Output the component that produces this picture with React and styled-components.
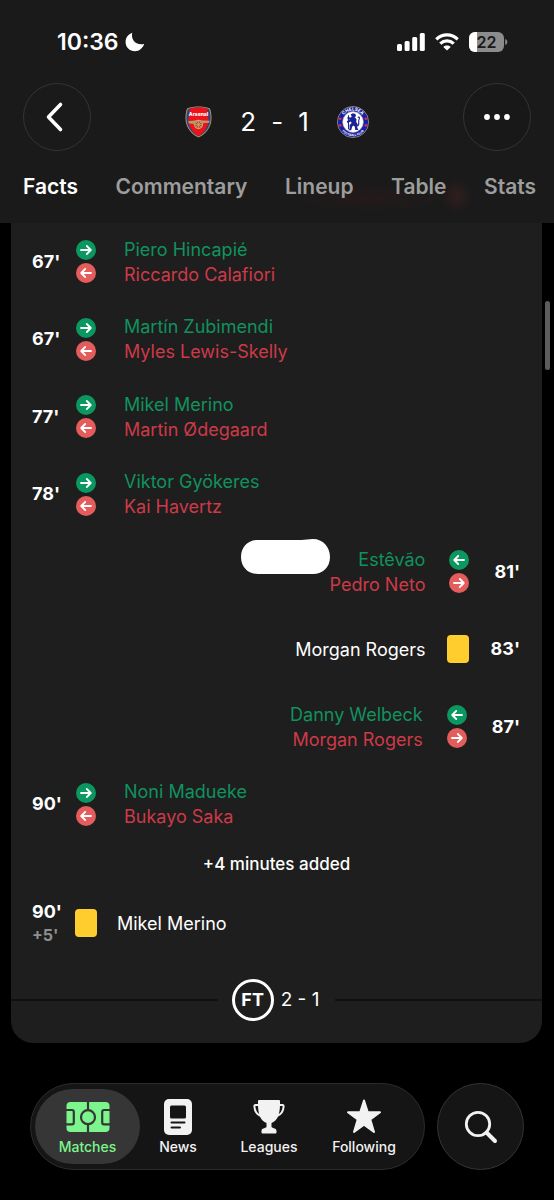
import styled, { createGlobalStyle } from "styled-components";

const GlobalStyle = createGlobalStyle`
  * {
    box-sizing: border-box;
  }
  body {
    margin: 0;
    background: #000;
    color: #fff;
    font-family: Inter, "Liberation Sans", sans-serif;
  }
  button {
    border: none;
    margin: 0;
    padding: 0;
    color: inherit;
    font-family: inherit;
    cursor: pointer;
  }
  svg {
    display: block;
    flex-shrink: 0;
  }
`;

const Page = styled.div`
  position: relative;
  min-height: 100vh;
  display: flex;
  flex-direction: column;
`;

const Header = styled.header`
  height: 223px;
  background:
    radial-gradient(ellipse 16px 18px at 457px 196px, rgba(100, 40, 40, 0.3), transparent),
    radial-gradient(ellipse 80px 14px at 370px 198px, rgba(80, 25, 30, 0.2), transparent),
    #1a1a1a;
`;

const StatusBar = styled.div`
  height: 83px;
  padding: 0 46px 0 57px;
  display: flex;
  align-items: center;
  justify-content: space-between;
`;

const StatusGroup = styled.div`
  display: flex;
  align-items: center;
  gap: ${(p) => p.$gap}px;
`;

const Clock = styled.span`
  font-size: 23px;
  font-weight: 600;
  line-height: 28px;
`;

const MatchBar = styled.div`
  height: 68px;
  padding: 0 23px;
  display: flex;
  align-items: center;
  justify-content: space-between;
`;

const RoundButton = styled.button`
  width: ${(p) => p.$size}px;
  height: ${(p) => p.$size}px;
  flex-shrink: 0;
  display: flex;
  align-items: center;
  justify-content: center;
  border: 1px solid #343434;
  border-radius: 50%;
  background: ${(p) => p.$bg};
`;

const ScoreLine = styled.div`
  display: flex;
  align-items: center;
  gap: 28px;
  padding-top: 9px;
`;

const Score = styled.div`
  display: flex;
  gap: 15px;
  font-size: 26px;
  line-height: 32px;
`;

const Tabs = styled.nav`
  height: 72px;
  padding: 0 18px 0 23px;
  display: flex;
  align-items: center;
  justify-content: space-between;
`;

const Tab = styled.button`
  background: none;
  font-size: 21px;
  font-weight: 600;
  line-height: 24px;
  color: ${(p) => (p.$active ? "#fff" : "#9d9d9d")};
`;

const Card = styled.main`
  margin: 0 12px 0 11px;
  padding-bottom: 5px;
  background: #1e1e1e;
  border-radius: 0 0 22px 22px;
`;

const EventList = styled.div`
  min-height: 620px;
  display: grid;
  grid-auto-rows: 1fr;
`;

const EventRow = styled.div`
  min-height: 76px;
  padding: 0 22px 0 21px;
  display: flex;
  align-items: center;
  flex-direction: ${(p) => (p.$away ? "row-reverse" : "row")};
`;

const Minute = styled.div`
  width: ${(p) => (p.$away ? "auto" : "43px")};
  font-size: 18px;
  font-weight: 700;
  line-height: 24px;
`;

const Added = styled.div`
  color: #8f8f8f;
  font-size: 16px;
  line-height: 22px;
`;

const SubIcons = styled.div`
  width: 22px;
  margin-right: ${(p) => (p.$away ? 24 : 0)}px;
  display: flex;
  flex-direction: column;
  align-items: center;
  gap: 3px;
`;

const YellowCard = styled.div`
  width: 22px;
  height: 28px;
  margin-right: ${(p) => (p.$away ? 22 : 0)}px;
  border-radius: 4px;
  background: #ffce2e;
`;

const Names = styled.div`
  margin: ${(p) => (p.$away ? "0 23px 0 0" : "0 0 0 27px")};
  text-align: ${(p) => (p.$away ? "right" : "left")};
  font-size: 18px;
  line-height: 25px;
`;

const NameIn = styled.div`
  color: #10925e;
`;

const NameOut = styled.div`
  color: #cd3a48;
`;

const Player = styled.div`
  margin: ${(p) => (p.$away ? "0 21px 0 0" : "0 0 0 20px")};
  font-size: 18px;
  line-height: 25px;
`;

const Blob = styled.svg`
  align-self: flex-start;
  margin-top: 6px;
`;

const AddedTime = styled.div`
  height: 42px;
  display: flex;
  align-items: center;
  justify-content: center;
  font-size: 17px;
  font-weight: 500;
`;

const FullTime = styled.div`
  height: 77px;
  display: flex;
  align-items: center;
`;

const Rule = styled.div`
  flex: 1;
  height: 2px;
  background: #111;
`;

const FullTimeLabel = styled.div`
  margin: 0 16px 0 14px;
  display: flex;
  align-items: center;
  gap: 7px;
  font-size: 19px;
`;

const FullTimeBadge = styled.span`
  width: 42px;
  height: 42px;
  display: flex;
  align-items: center;
  justify-content: center;
  border: 3px solid #fff;
  border-radius: 50%;
  font-size: 18px;
  font-weight: 700;
`;

const BottomBar = styled.footer`
  margin-top: 40px;
  padding: 0 30px 30px;
  display: flex;
  gap: 12px;
`;

const NavPill = styled.nav`
  flex: 1;
  height: 87px;
  padding: 5px 18px 5px 4px;
  display: grid;
  grid-template-columns: 105fr 76fr 106fr 84fr;
  border: 1px solid #2c2c2c;
  border-radius: 44px;
  background: #151515;
`;

const NavItem = styled.button`
  display: flex;
  flex-direction: column;
  align-items: center;
  gap: 3px;
  padding-top: 10px;
  border-radius: 38px;
  background: ${(p) => (p.$active ? "#363636" : "none")};
  color: ${(p) => (p.$active ? "#7cf58c" : "#f2f2f2")};
  font-size: 14px;
  font-weight: 500;
  line-height: 18px;
`;

const Scrollbar = styled.div`
  position: absolute;
  top: 301px;
  right: 4px;
  width: 5px;
  height: 69px;
  border-radius: 3px;
  background: #5c5c5c;
`;

const events = [
  { minute: "67'", on: "Piero Hincapié", off: "Riccardo Calafiori" },
  { minute: "67'", on: "Martín Zubimendi", off: "Myles Lewis-Skelly" },
  { minute: "77'", on: "Mikel Merino", off: "Martin Ødegaard" },
  { minute: "78'", on: "Viktor Gyökeres", off: "Kai Havertz" },
  { minute: "81'", on: "Estêvão", off: "Pedro Neto", away: true, blob: true },
  { minute: "83'", booked: "Morgan Rogers", away: true },
  { minute: "87'", on: "Danny Welbeck", off: "Morgan Rogers", away: true },
  { minute: "90'", on: "Noni Madueke", off: "Bukayo Saka" },
];

const ArrowBadge = ({ color, left }) => (
  <svg width="20" height="20" viewBox="0 0 20 20">
    <circle cx="10" cy="10" r="10" fill={color} />
    <path
      d={left ? "M15 10H5.4M9.2 6L5.2 10L9.2 14" : "M5 10H14.6M10.8 6L14.8 10L10.8 14"}
      fill="none"
      stroke="#fff"
      strokeWidth="1.8"
      strokeLinecap="round"
      strokeLinejoin="round"
    />
  </svg>
);

const Event = ({ minute, extra, on, off, booked, away, blob }) => (
  <EventRow $away={away}>
    <Minute $away={away}>
      {minute}
      {extra && <Added>{extra}</Added>}
    </Minute>
    {booked ? (
      <>
        <YellowCard $away={away} />
        <Player $away={away}>{booked}</Player>
      </>
    ) : (
      <>
        <SubIcons $away={away}>
          <ArrowBadge color="#0b9760" left={away} />
          <ArrowBadge color="#e45d5c" left={!away} />
        </SubIcons>
        <Names $away={away}>
          <NameIn>{on}</NameIn>
          <NameOut>{off}</NameOut>
        </Names>
      </>
    )}
    {blob && (
      <Blob width="89" height="36" viewBox="0 0 89 36">
        <path
          d="M17 1H60C65 1 67 0 72 0C82 0 89 8 89 18C89 28 82 35 72 35H17C7 35 0 28 0 18C0 8 7 1 17 1Z"
          fill="#fff"
        />
      </Blob>
    )}
  </EventRow>
);

const ArsenalCrest = () => (
  <svg width="27" height="32" viewBox="0 0 27 32">
    <path
      d="M2 2.5C6 .8 10 .4 13.500 .4S21 .8 25 2.500C26 5 26.600 9 26.500 13C26.300 22 20 28.500 13.500 31.600C7 28.500 .7 22 .5 13C.4 9 1 5 2 2.500Z"
      fill="#b49a62"
    />
    <path
      d="M2.800 3.200C6 1.900 10 1.300 13.500 1.300S21 1.900 24.200 3.200C25.200 6 25.700 9 25.600 13C25.400 21 20 27.500 13.500 30.600C7 27.500 1.600 21 1.400 13C1.300 9 1.800 6 2.800 3.200Z"
      fill="#2d4486"
    />
    <path
      d="M4.500 2.800C10 1.100 17 1.100 22.500 2.800C21.900 7 22.500 10 23.700 13C23.800 20 19.500 26.500 13.500 30.200C7.500 26.500 3.200 20 3.300 13C4.500 10 5.100 7 4.500 2.800Z"
      fill="#ed1119"
    />
    <text
      x="13.500"
      y="10"
      textAnchor="middle"
      fill="#fff"
      fontFamily="Inter, sans-serif"
      fontSize="5"
      fontWeight="800"
    >
      Arsenal
    </text>
    <path d="M3 15.200L12 14.200L24.500 14.800L24.300 16.800L17 17.200L15 18.500L4 17.500Z" fill="#b59a66" />
    <circle cx="13.500" cy="18.500" r="4" fill="#c2413a" stroke="#c0a570" strokeWidth="1.300" />
    <path
      d="M13.500 14.800V22.200M9.800 18.500H17.200M10.900 15.900L16.100 21.100M16.100 15.900L10.900 21.100"
      stroke="#c0a570"
      strokeWidth=".8"
    />
  </svg>
);

const ChelseaCrest = () => (
  <svg width="32" height="32" viewBox="0 0 32 32">
    <defs>
      <path id="crestTop" d="M4.600 16A11.400 11.400 0 0 1 27.400 16" />
      <path id="crestBottom" d="M1.800 16A14.200 14.200 0 0 0 30.200 16" />
    </defs>
    <circle cx="16" cy="16" r="15.600" fill="#1520a8" stroke="#a89568" strokeWidth=".8" />
    <circle cx="16" cy="16" r="10.400" fill="#fff" stroke="#b9ad88" strokeWidth=".6" />
    <g fill="#fff" fontFamily="Inter, sans-serif" fontWeight="700" textAnchor="middle">
      <text fontSize="4.500">
        <textPath href="#crestTop" startOffset="50%">CHELSEA</textPath>
      </text>
      <text fontSize="3">
        <textPath href="#crestBottom" startOffset="50%">FOOTBALL CLUB</textPath>
      </text>
    </g>
    <g fill="#d72a58">
      <circle cx="3.200" cy="12.800" r="1.300" />
      <circle cx="3.200" cy="19.400" r="1.300" />
      <circle cx="28.800" cy="12.800" r="1.300" />
      <circle cx="28.800" cy="19.400" r="1.300" />
    </g>
    <path
      d="M13.600 8.500L16 7.300L18.500 8L19 10.300L17.600 11.200L19.500 13L19.200 16L20.800 18.500L20.200 21.500L21.500 24H18.200L18 21.500L17 19.500L15.200 20.500L14.200 24.300H11L12.700 22.500L12.600 19L14.600 17L13.800 15.500L10.500 17L9.800 15.200L13 13.200L10.800 13.300L10.200 11.300L13.800 11.500L14.800 10.500Z"
      fill="#1a2394"
    />
    <path
      d="M20.200 20C23.500 19 20.500 15.500 22.200 13C23.300 11.500 21.500 10 21 11.800M11.500 9.200V23"
      fill="none"
      stroke="#1a2394"
      strokeWidth="1.100"
    />
  </svg>
);

const MoonIcon = () => (
  <svg width="20" height="20" viewBox="0 0 20 20">
    <path
      d="M7.200 .8C5.800 7.500 10.500 13.900 19.200 12C17.500 16.600 14 19.200 10 19.200C4.600 19.200 .6 15.200 .6 10C.6 5.800 3.200 2.300 7.200 .8Z"
      fill="#fff"
    />
  </svg>
);

const SignalIcon = () => (
  <svg width="28" height="18" viewBox="0 0 28 18" fill="#fff">
    <rect x="0" y="11" width="5" height="7" rx="1.500" />
    <rect x="7.600" y="8" width="5" height="10" rx="1.500" />
    <rect x="15.200" y="4" width="5" height="14" rx="1.500" />
    <rect x="22.800" y="0" width="5" height="18" rx="1.500" />
  </svg>
);

const WifiIcon = () => (
  <svg width="24" height="18" viewBox="0 0 24 18" fill="none" stroke="#fff" strokeWidth="3.200">
    <path d="M1.300 6.300C7.300 .3 16.700 .3 22.700 6.300" />
    <path d="M5.300 10.600C9.200 6.900 14.800 6.900 18.700 10.600" />
    <path d="M12 17.600L8.300 13.900C10.400 12 13.600 12 15.700 13.900Z" fill="#fff" stroke="none" />
  </svg>
);

const BatteryIcon = () => (
  <svg width="39" height="20" viewBox="0 0 39 20">
    <clipPath id="battery">
      <rect width="35" height="20" rx="6" />
    </clipPath>
    <g clipPath="url(#battery)">
      <rect width="35" height="20" fill="#8c8c8c" />
      <rect width="8" height="20" fill="#fff" />
    </g>
    <path d="M36.200 7C39 8 39 12 36.200 13Z" fill="#8c8c8c" />
    <text
      x="17.500"
      y="16"
      textAnchor="middle"
      fill="#1a1a1a"
      fontFamily="Inter, sans-serif"
      fontSize="16"
      fontWeight="600"
    >
      22
    </text>
  </svg>
);

const MatchesIcon = () => (
  <svg width="44" height="36" viewBox="0 0 44 36">
    <rect x=".5" y="3" width="43" height="30" rx="4" fill="currentColor" />
    <g fill="none" stroke="#363636" strokeWidth="2.200">
      <path d="M22 3V11M22 25.500V33" />
      <circle cx="22" cy="18.200" r="7" />
      <path d="M0 11H6Q7.800 11 7.800 13V23.500Q7.800 25.300 6 25.300H0M44 11H38Q36.200 11 36.200 13V23.500Q36.200 25.300 38 25.300H44" />
    </g>
  </svg>
);

const NewsIcon = () => (
  <svg width="28" height="36" viewBox="0 0 28 36">
    <rect y="0" width="28" height="36" rx="5" fill="currentColor" />
    <rect x="6" y="6.500" width="16" height="13" rx="1.500" fill="#151515" />
    <path d="M7.500 23.500H20.500M7.500 28.500H16" stroke="#151515" strokeWidth="2" strokeLinecap="round" />
  </svg>
);

const TrophyIcon = () => (
  <svg width="32" height="36" viewBox="0 0 32 36">
    <path
      d="M6 1H26Q27 1 27 2V5C27 16 24 22 18.500 24V28C20 29.500 23.500 29 23.500 32V33.500Q23.500 34.500 22.500 34.500H9.500Q8.500 34.500 8.500 33.500V32C8.500 29 12 29.500 13.500 28V24C8 22 5 16 5 5V2Q5 1 6 1Z"
      fill="currentColor"
    />
    <path
      d="M6 6H2.500Q1.300 6 1.400 7.500C1.600 12 4 15.500 8 17M26 6H29.500Q30.700 6 30.600 7.500C30.400 12 28 15.500 24 17"
      fill="none"
      stroke="currentColor"
      strokeWidth="2"
    />
  </svg>
);

const StarIcon = () => (
  <svg width="36" height="36" viewBox="0 0 36 36">
    <path
      d="M18 1.500L21.800 13.300H34L24.300 20.500L28 33L18 25.700L8 33L11.700 20.500L2 13.300H14.200Z"
      fill="currentColor"
      stroke="currentColor"
      strokeWidth="2"
      strokeLinejoin="round"
    />
  </svg>
);

const SearchIcon = () => (
  <svg width="34" height="34" viewBox="0 0 34 34" fill="none" stroke="#f2f2f2" strokeLinecap="round">
    <circle cx="14" cy="14" r="11.700" strokeWidth="2.800" />
    <path d="M22.500 22.500L31 31" strokeWidth="4" />
  </svg>
);

const App = () => {
  return (
    <Page>
      <GlobalStyle />
      <Header>
        <StatusBar>
          <StatusGroup $gap={6}>
            <Clock>10:36</Clock>
            <MoonIcon />
          </StatusGroup>
          <StatusGroup $gap={10}>
            <SignalIcon />
            <WifiIcon />
            <BatteryIcon />
          </StatusGroup>
        </StatusBar>
        <MatchBar>
          <RoundButton $size={68} $bg="#1a1a1a" aria-label="Back">
            <svg width="22" height="32" viewBox="0 0 22 32">
              <path
                d="M14.500 3.500L2.500 16L14.500 28.500"
                fill="none"
                stroke="#fff"
                strokeWidth="3.600"
                strokeLinecap="round"
                strokeLinejoin="round"
              />
            </svg>
          </RoundButton>
          <ScoreLine>
            <ArsenalCrest />
            <Score>
              <span>2</span>
              <span>-</span>
              <span>1</span>
            </Score>
            <ChelseaCrest />
          </ScoreLine>
          <RoundButton $size={68} $bg="#191818" aria-label="More">
            <svg width="26" height="6" viewBox="0 0 26 6" fill="#fff">
              <circle cx="3" cy="3" r="2.900" />
              <circle cx="13" cy="3" r="2.900" />
              <circle cx="23" cy="3" r="2.900" />
            </svg>
          </RoundButton>
        </MatchBar>
        <Tabs>
          <Tab $active>Facts</Tab>
          <Tab>Commentary</Tab>
          <Tab>Lineup</Tab>
          <Tab>Table</Tab>
          <Tab>Stats</Tab>
        </Tabs>
      </Header>

      <Card>
        <EventList>
          {events.map((event) => (
            <Event key={event.minute + event.on} {...event} />
          ))}
        </EventList>
        <AddedTime>+4 minutes added</AddedTime>
        <Event minute="90'" extra="+5'" booked="Mikel Merino" />
        <FullTime>
          <Rule />
          <FullTimeLabel>
            <FullTimeBadge>FT</FullTimeBadge>
            <span>2 - 1</span>
          </FullTimeLabel>
          <Rule />
        </FullTime>
      </Card>

      <BottomBar>
        <NavPill>
          <NavItem $active>
            <MatchesIcon />
            Matches
          </NavItem>
          <NavItem>
            <NewsIcon />
            News
          </NavItem>
          <NavItem>
            <TrophyIcon />
            Leagues
          </NavItem>
          <NavItem>
            <StarIcon />
            Following
          </NavItem>
        </NavPill>
        <RoundButton $size={87} $bg="#151515" aria-label="Search">
          <SearchIcon />
        </RoundButton>
      </BottomBar>
      <Scrollbar />
    </Page>
  );
};

export default App;
